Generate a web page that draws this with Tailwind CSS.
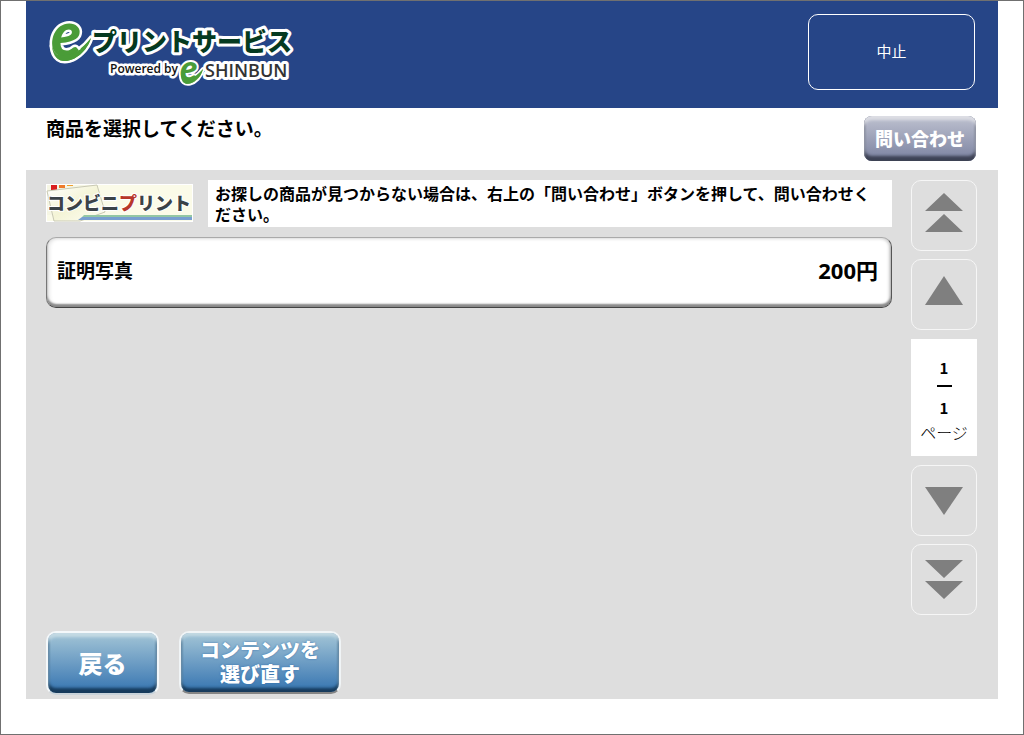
<!DOCTYPE html>
<html lang="ja">
<head>
    <meta charset="UTF-8">
    <meta name="viewport" content="width=device-width, initial-scale=1.0">
    <title>eプリントサービス</title>
    <script src="https://cdn.jsdelivr.net/npm/@tailwindcss/browser@4"></script>
</head>
<body class="flex min-h-screen flex-col border border-[#707070] bg-white px-[25px] pb-[35px] font-['Noto_Sans_CJK_JP',sans-serif] text-black">
    <!-- Header -->
    <header class="flex h-[107px] items-start justify-between bg-[#264587] pt-[13px] pr-[23px] pl-5">
        <svg class="h-20 w-[250px] overflow-visible" viewBox="0 0 250 80" role="img" aria-label="eプリントサービス Powered by e SHINBUN">
            <g stroke="#fff" stroke-linejoin="round" paint-order="stroke">
                <g fill="#4a9c38" stroke-width="5">
                    <path d="M6 32C9 43 28 46 45 24C38 47 8 58 6 32Z"/>
                    <text x="5" y="43" font-family="Lato, sans-serif" font-size="62" font-weight="900" font-style="italic">e</text>
                    <path stroke="none" d="M6 32C9 41 12 42 18 41C28 41 36 36 45 24C38 47 8 58 6 32Z"/>
                </g>
                <text x="46" y="37" fill="#053a20" stroke-width="6" font-family="'Noto Sans CJK JP', sans-serif" font-size="25" font-weight="900">プリントサービス</text>
                <text x="64" y="59" fill="#111" stroke-width="5" font-family="'Open Sans', sans-serif" font-size="12" font-weight="600">Powered by</text>
                <text x="159" y="63" fill="#333" stroke-width="6" font-family="'Open Sans', sans-serif" font-size="18" font-weight="600">SHINBUN</text>
                <g fill="#4a9c38" stroke-width="4">
                    <path d="M135 60C137 67 147 68 157 55C153 71 134 76 135 60Z"/>
                    <text x="134" y="67" font-family="Lato, sans-serif" font-size="36" font-weight="900" font-style="italic">e</text>
                    <path stroke="none" d="M135 60C137 66 147 67 157 55C153 71 134 76 135 60Z"/>
                </g>
            </g>
        </svg>
        <button type="button" class="h-[76px] w-[167px] rounded-[10px] border border-white pb-[2px] text-[15px] text-white">中止</button>
    </header>

    <div class="flex h-[62px] items-start justify-between pt-2 pr-[22px] pl-5">
        <h1 class="text-[19px] leading-6 font-bold">商品を選択してください。</h1>
        <button type="button" class="h-[45px] w-28 rounded-lg bg-linear-to-b from-[#bfc2d0] to-[#7b82a0] pb-[2px] text-lg leading-6 font-black text-white shadow-[inset_0_4px_3px_#dcdde4,inset_0_-5px_3px_#3d4254,inset_1px_0_2px_#777d91,inset_-1px_0_2px_#777d91]">問い合わせ</button>
    </div>

    <!-- Product list -->
    <main class="flex flex-1 gap-[19px] bg-[#dedede] pt-[10px] pr-[21px] pb-1 pl-5">
        <section class="flex flex-1 flex-col">
            <div class="flex items-start gap-[15px]">
                <svg class="mt-1 h-[38px] w-[147px] shrink-0" viewBox="0 0 147 38" role="img" aria-label="コンビニプリント">
                    <defs>
                        <linearGradient id="paper" x1="0" y1="0" x2="1" y2="1">
                            <stop offset="0" stop-color="#fff"/>
                            <stop offset="0.5" stop-color="#f4f4d6"/>
                            <stop offset="1" stop-color="#fefef4"/>
                        </linearGradient>
                    </defs>
                    <rect x="0.5" y="0.5" width="146" height="37" fill="#fbfbe8" stroke="#fff"/>
                    <path d="M1 1h50v30H1z" fill="#f6f6e4"/>
                    <path d="M5 1h6v5H5z" fill="#d91d20"/>
                    <path d="M13 1h6v3h-6z" fill="#ee7a2b"/>
                    <path d="M21 1h6v1h-6z" fill="#efa02d"/>
                    <path d="M1 7L51 1L59 28L34 37H8Z" fill="url(#paper)" stroke="#c9c9b4"/>
                    <path d="M38 31H146v2H36z" fill="#93c7a4"/>
                    <path d="M36 33H146v3H32z" fill="#789fd0"/>
                    <text x="1" y="26" font-family="'Noto Sans CJK JP', sans-serif" font-size="18" font-weight="900" fill="#3b4247" stroke="#fff" stroke-width="2" paint-order="stroke">コンビニ<tspan fill="#b8372b">プ</tspan>リント</text>
                </svg>
                <p class="flex-1 bg-white px-[7px] pt-[3px] pb-[2px] text-base leading-[21px] font-bold">お探しの商品が見つからない場合は、右上の「問い合わせ」ボタンを押して、問い合わせください。</p>
            </div>

            <button type="button" class="mt-[10px] flex h-[71px] items-center justify-between rounded-[10px] border border-t-[#aaa] border-r-[#555] border-b-[#444] border-l-[#777] bg-white pr-[13px] pb-1 pl-[10px] font-bold shadow-[inset_0_-3px_2px_#888,inset_2px_0_4px_#ddd,inset_-2px_0_3px_#ccc]">
                <span class="text-[19px]">証明写真</span>
                <span class="font-['Open_Sans','Noto_Sans_CJK_JP',sans-serif] text-[22px]">200円</span>
            </button>

            <div class="mt-auto flex items-start gap-5">
                <button type="button" class="h-16 w-[113px] rounded-[10px] border-2 border-[#f4f8fa] border-b-[#c9d3da] bg-linear-to-b from-[#a3c5d6] to-[#3474b0] text-2xl font-black text-white shadow-[inset_0_4px_3px_#c4dae4,inset_0_-5px_3px_#173b5c,inset_1px_0_2px_#386a92,inset_-1px_0_2px_#386a92]">戻る</button>
                <button type="button" class="h-[63px] w-[162px] rounded-[10px] border-2 border-[#f0f4f6] border-b-[#858585] bg-linear-to-b from-[#a3c5d6] to-[#3474b0] pb-[2px] text-xl leading-6 font-black text-white shadow-[inset_0_3px_3px_#c4dae4,inset_0_-4px_3px_#173b5c,inset_1px_0_2px_#386a92,inset_-1px_0_2px_#386a92] text-shadow-[0_0_2px_#2f6ca8]">コンテンツを<br>選び直す</button>
            </div>
        </section>

        <!-- Pager -->
        <nav class="flex w-[66px] flex-col gap-2" aria-label="ページ">
            <button type="button" aria-label="先頭ページ" class="h-[71px] rounded-[10px] border border-[#f6f6f6]">
                <svg class="mx-auto h-[46px] w-[38px]" viewBox="0 0 38 46" fill="#7f7f7f"><path d="M19 0L38 18H0zM19 21L38 39H0z"/></svg>
            </button>
            <button type="button" aria-label="前のページ" class="h-[71px] rounded-[10px] border border-[#f6f6f6]">
                <svg class="mx-auto h-[38px] w-[38px]" viewBox="0 0 38 38" fill="#7f7f7f"><path d="M19 0L38 29H0z"/></svg>
            </button>
            <div class="my-px flex h-[117px] flex-col items-center bg-white pt-[19px] text-[15px] leading-5 font-bold">
                <span>1</span>
                <span class="mt-[7px] mb-[11px] h-[2px] w-[15px] bg-black"></span>
                <span>1</span>
                <span class="mt-1 text-base leading-5 font-light">ページ</span>
            </div>
            <button type="button" aria-label="次のページ" class="h-[71px] rounded-[10px] border border-[#f6f6f6]">
                <svg class="mx-auto h-[30px] w-[38px]" viewBox="0 0 38 30" fill="#7f7f7f"><path d="M0 1H38L19 29z"/></svg>
            </button>
            <button type="button" aria-label="最終ページ" class="h-[71px] rounded-[10px] border border-[#f6f6f6]">
                <svg class="mx-auto h-[40px] w-[38px]" viewBox="0 0 38 40" fill="#7f7f7f"><path d="M0 0H38L19 18zM0 21H38L19 39z"/></svg>
            </button>
        </nav>
    </main>
</body>
</html>
